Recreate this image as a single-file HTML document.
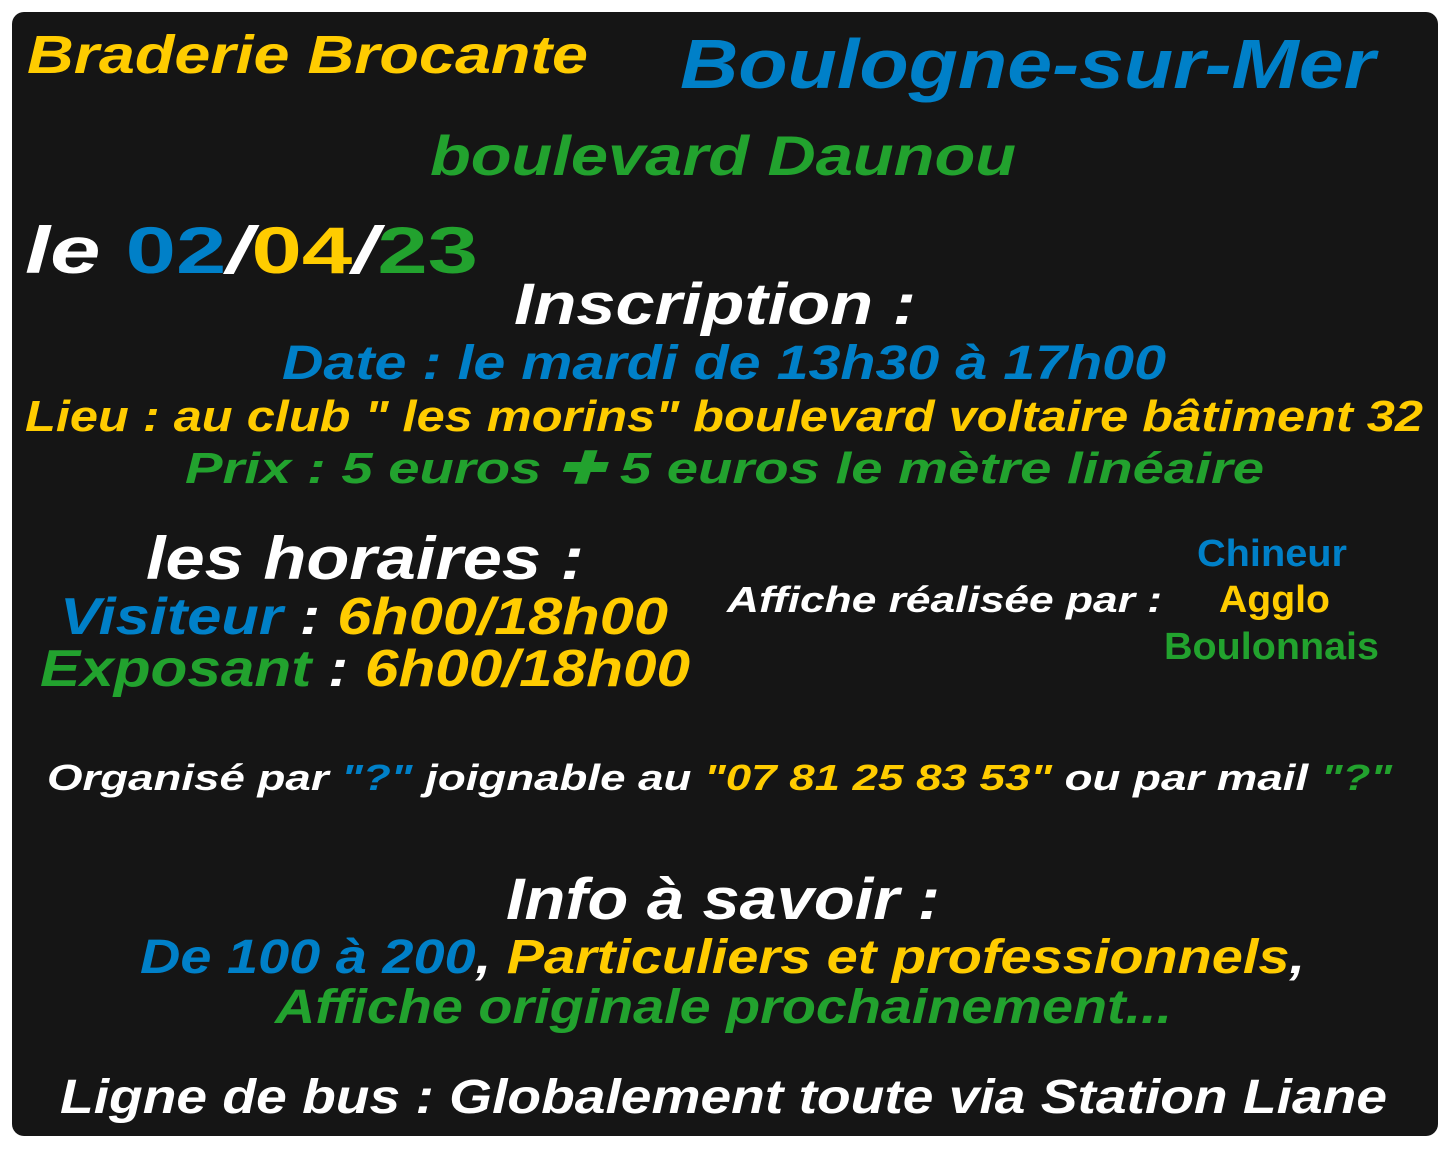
<!DOCTYPE html>
<html><head><meta charset="utf-8"><style>
html,body{margin:0;padding:0;background:#fff;width:1450px;height:1150px;overflow:hidden}
#b{position:absolute;left:12px;top:12px;width:1426px;height:1124px;background:#151515;border-radius:12px}
.l{position:absolute;white-space:nowrap;line-height:1;font-family:"Liberation Sans",sans-serif;font-weight:bold;font-style:italic;color:#fff;transform-origin:0 0}
.y{color:#ffcc00}.bl{color:#0080c8}.g{color:#22a22e}.w{color:#fff}
.n{font-style:normal}
</style></head><body>
<div id="b"></div>
<div class="l y" id="t1">Braderie Brocante</div>
<div class="l bl" id="t2">Boulogne-sur-Mer</div>
<div class="l g" id="t3">boulevard Daunou</div>
<div class="l w" id="t4">le <span class="bl n">02</span>/<span class="y n">04</span>/<span class="g n">23</span></div>
<div class="l w" id="t5">Inscription :</div>
<div class="l bl" id="t6">Date : le mardi de 13h30 à 17h00</div>
<div class="l y" id="t7">Lieu : au club " les morins" boulevard voltaire bâtiment 32</div>
<div class="l g" id="t8">Prix : 5 euros ✚ 5 euros le mètre linéaire</div>
<div class="l w" id="t9">les horaires :</div>
<div class="l w" id="t10"><span class="bl">Visiteur</span> : <span class="y">6h00/18h00</span></div>
<div class="l w" id="t11"><span class="g">Exposant</span> : <span class="y">6h00/18h00</span></div>
<div class="l w" id="t12">Affiche réalisée par :</div>
<div class="l bl n" id="t13">Chineur</div>
<div class="l y n" id="t14">Agglo</div>
<div class="l g n" id="t15">Boulonnais</div>
<div class="l w" id="t16">Organisé par <span class="bl">"?"</span> joignable au <span class="y">"07 81 25 83 53"</span> ou par mail <span class="g">"?"</span></div>
<div class="l w" id="t17">Info à savoir :</div>
<div class="l w" id="t18"><span class="bl">De 100 à 200</span>, <span class="y">Particuliers et professionnels</span>,</div>
<div class="l g" id="t19">Affiche originale prochainement...</div>
<div class="l w" id="t20">Ligne de bus : Globalement toute via Station Liane</div>
<script>
// id, left, right, baseline, size
var L=[
["t1",27,588,74,54],["t2",680,1375,88,70],["t3",430,1016,175,56],["t4",25,478,273,66],
["t5",514,916,325,58],["t6",282,1166,381,48],["t7",25,1423,432,44],["t8",185,1264,484,44],
["t9",146,584,580,60],["t10",60,668,635,52],["t11",40,690,687,52],["t12",727,1162,612,36],
["t13",1197,1347,567,38],["t14",1219,1330,613,38],["t15",1164,1379,660,38],
["t16",47,1392,790,36],["t17",506,940,920,58],["t18",140,1305,975,48],["t19",275,1172,1025,48],
["t20",60,1387,1115,48]];
L.forEach(function(a){var e=document.getElementById(a[0]);e.style.fontSize=a[4]+"px";
e.style.left=a[1]+"px";e.style.top=(a[3]-0.846*a[4])+"px";
var w=e.getBoundingClientRect().width;var s=(a[2]-a[1])/w;e.style.transform="scaleX("+s+")";});
</script>
</body></html>
